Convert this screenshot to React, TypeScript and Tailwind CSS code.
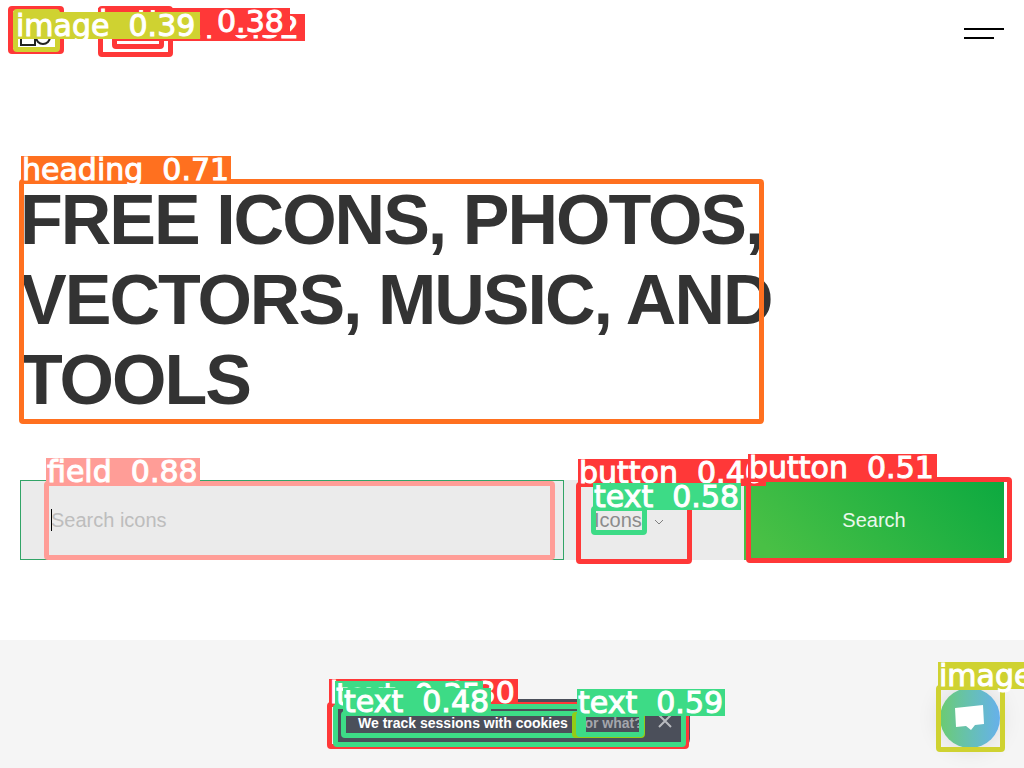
import React from "react";

type BoxProps = { frame: string; tag?: string; label?: string };

function Annotation({ frame, tag, label }: BoxProps) {
  return (
    <>
      <div className={`absolute rounded border-5 ${frame}`} />
      {label && (
        <span
          className={`absolute whitespace-pre pl-px font-['DejaVu_Sans',sans-serif] text-[30px] leading-[28px] text-white [-webkit-text-stroke:1px_white] ${tag}`}
        >
          {label}
        </span>
      )}
    </>
  );
}

function Annotations() {
  return (
    <div className="pointer-events-none absolute inset-0 overflow-hidden">
      <Annotation frame="left-[98px] top-[6px] w-[75px] h-[51px] border-[#ff3838]" />
      <Annotation
        frame="left-[112px] top-[16px] w-[52px] h-[33px] border-[#ff3838]"
        tag="left-[113px] top-[14px] w-[192px] h-[27px] bg-[#ff3838]"
        label="button  0.32"
      />
      <Annotation
        frame="left-[8px] top-[6px] w-[56px] h-[48px] border-[#ff3838]"
        tag="left-[98px] top-[8px] w-[192px] h-[27px] bg-[#ff3838]"
        label="button  0.38"
      />
      <Annotation
        frame="left-[13px] top-[9px] w-[47px] h-[43px] border-[#cfd231]"
        tag="left-[15px] top-[12px] w-[185px] h-[27px] bg-[#cfd231]"
        label="image  0.39"
      />
      <Annotation
        frame="left-[19px] top-[179px] w-[745px] h-[245px] border-[#ff701f]"
        tag="left-[21px] top-[156px] w-[210px] h-[27px] bg-[#ff701f]"
        label="heading  0.71"
      />
      <Annotation
        frame="left-[44px] top-[481px] w-[511px] h-[79px] border-[#ff9d97]"
        tag="left-[46px] top-[458px] w-[154px] h-[27px] bg-[#ff9d97]"
        label="field  0.88"
      />
      <Annotation
        frame="left-[576px] top-[482px] w-[116px] h-[82px] border-[#ff3838]"
        tag="left-[578px] top-[459px] w-[188px] h-[27px] bg-[#ff3838]"
        label="button  0.40"
      />
      <Annotation
        frame="left-[591px] top-[506px] w-[56px] h-[29px] border-[#3ddb86]"
        tag="left-[593px] top-[483px] w-[148px] h-[27px] bg-[#3ddb86]"
        label="text  0.58"
      />
      <Annotation
        frame="left-[746px] top-[477px] w-[266px] h-[86px] border-[#ff3838]"
        tag="left-[748px] top-[454px] w-[189px] h-[27px] bg-[#ff3838]"
        label="button  0.51"
      />
      <Annotation
        frame="left-[327px] top-[702px] w-[362px] h-[47px] border-[#ff3838]"
        tag="left-[329px] top-[679px] w-[189px] h-[26px] bg-[#ff3838]"
        label="button  0.30"
      />
      <Annotation
        frame="left-[333px] top-[704px] w-[353px] h-[43px] border-[#3ddb86]"
        tag="left-[335px] top-[681px] w-[148px] h-[27px] bg-[#3ddb86]"
        label="text  0.35"
      />
      <Annotation
        frame="left-[341px] top-[711px] w-[245px] h-[27px] border-[#3ddb86]"
        tag="left-[343px] top-[688px] w-[148px] h-[27px] bg-[#3ddb86]"
        label="text  0.48"
      />
      <Annotation frame="left-[572px] top-[712px] w-[73px] h-[26px] border-[#92cc17]" />
      <Annotation
        frame="left-[576px] top-[712px] w-[68px] h-[25px] border-[#3ddb86]"
        tag="left-[577px] top-[689px] w-[148px] h-[27px] bg-[#3ddb86]"
        label="text  0.59"
      />
      <Annotation
        frame="left-[936px] top-[685px] w-[69px] h-[67px] border-[#cfd231]"
        tag="left-[938px] top-[662px] w-[188px] h-[27px] bg-[#cfd231]"
        label="image  0.75"
      />
    </div>
  );
}

export default function App() {
  return (
    <div className="relative flex min-h-screen flex-col overflow-hidden bg-white font-['Liberation_Sans',Arial,sans-serif]">
      <header className="flex items-start justify-between px-5 pt-5">
        <a href="#home" aria-label="Home" className="block">
          <svg width="32" height="28" viewBox="0 0 32 28" fill="none" stroke="#222" strokeWidth="2">
            <path d="M1 12h14v13H1z" />
            <circle cx="23" cy="17" r="7" />
          </svg>
        </a>
        <button aria-label="Menu" className="flex flex-col items-start gap-[7px] pt-2">
          <span className="h-0.5 w-10 bg-black" />
          <span className="h-0.5 w-[30px] bg-black" />
        </button>
      </header>
      <main className="px-5 pt-[132px]">
        <h1 className="max-w-[800px] text-[70px] leading-[80px] font-bold tracking-[-2px] text-[#333]">
          FREE ICONS, PHOTOS, VECTORS, MUSIC, AND TOOLS
        </h1>
        <form className="mt-15 flex h-20 bg-[#ebebeb]" onSubmit={(e) => e.preventDefault()}>
          <label className="relative flex flex-1 border border-[#32a467]">
            <input
              type="text"
              aria-label="Search icons"
              placeholder="Search icons"
              className="w-full bg-transparent px-[30px] text-xl text-[#333] outline-none placeholder:text-[#bdbdbd]"
            />
            <span className="absolute top-7 left-[30px] h-[22px] w-px bg-black" />
          </label>
          <div className="flex w-[180px] items-center pl-[30px]">
            <select
              aria-label="Content type"
              className="appearance-none bg-transparent text-xl text-[#8b8b8b] outline-none"
            >
              <option>Icons</option>
            </select>
            <svg className="mt-1 ml-3" width="10" height="6" viewBox="0 0 10 6" fill="none" stroke="#808080">
              <path d="M1 1l4 4 4-4" />
            </svg>
          </div>
          <button
            type="submit"
            className="w-[260px] bg-[linear-gradient(45deg,#49c045_0%,#49c045_10%,#0ca940_100%)] text-xl text-white/90"
          >
            Search
          </button>
        </form>
      </main>
      <section className="mt-20 flex grow items-start justify-center bg-[#f5f5f5] pt-[59px]">
        <div className="flex h-12 w-[356px] items-center rounded-lg bg-[#4b4f5a] pl-6 text-sm font-bold whitespace-nowrap text-white">
          <span>We track sessions with cookies</span>
          <a href="#cookies" className="ml-2 text-[#a4a6ac]">
            For what?
          </a>
          <button aria-label="Close" className="mr-[18px] mb-1 ml-auto">
            <svg width="14" height="14" viewBox="0 0 14 14" stroke="#b8babf" strokeWidth="2">
              <path d="M1 1l12 12M13 1L1 13" />
            </svg>
          </button>
        </div>
      </section>
      <button
        aria-label="Open chat"
        className="absolute right-6 bottom-5 flex size-[60px] items-center justify-center rounded-full bg-linear-to-r from-[#6ccb6f] to-[#67b0eb] shadow-[0_0_24px_rgba(0,0,0,0.12)]"
      >
        <svg width="30" height="26" viewBox="0 0 30 26" fill="white">
          <path d="M0 3L28 0l1 19-9 1-4 5-5-4-10 1z" />
        </svg>
      </button>
      <Annotations />
    </div>
  );
}
